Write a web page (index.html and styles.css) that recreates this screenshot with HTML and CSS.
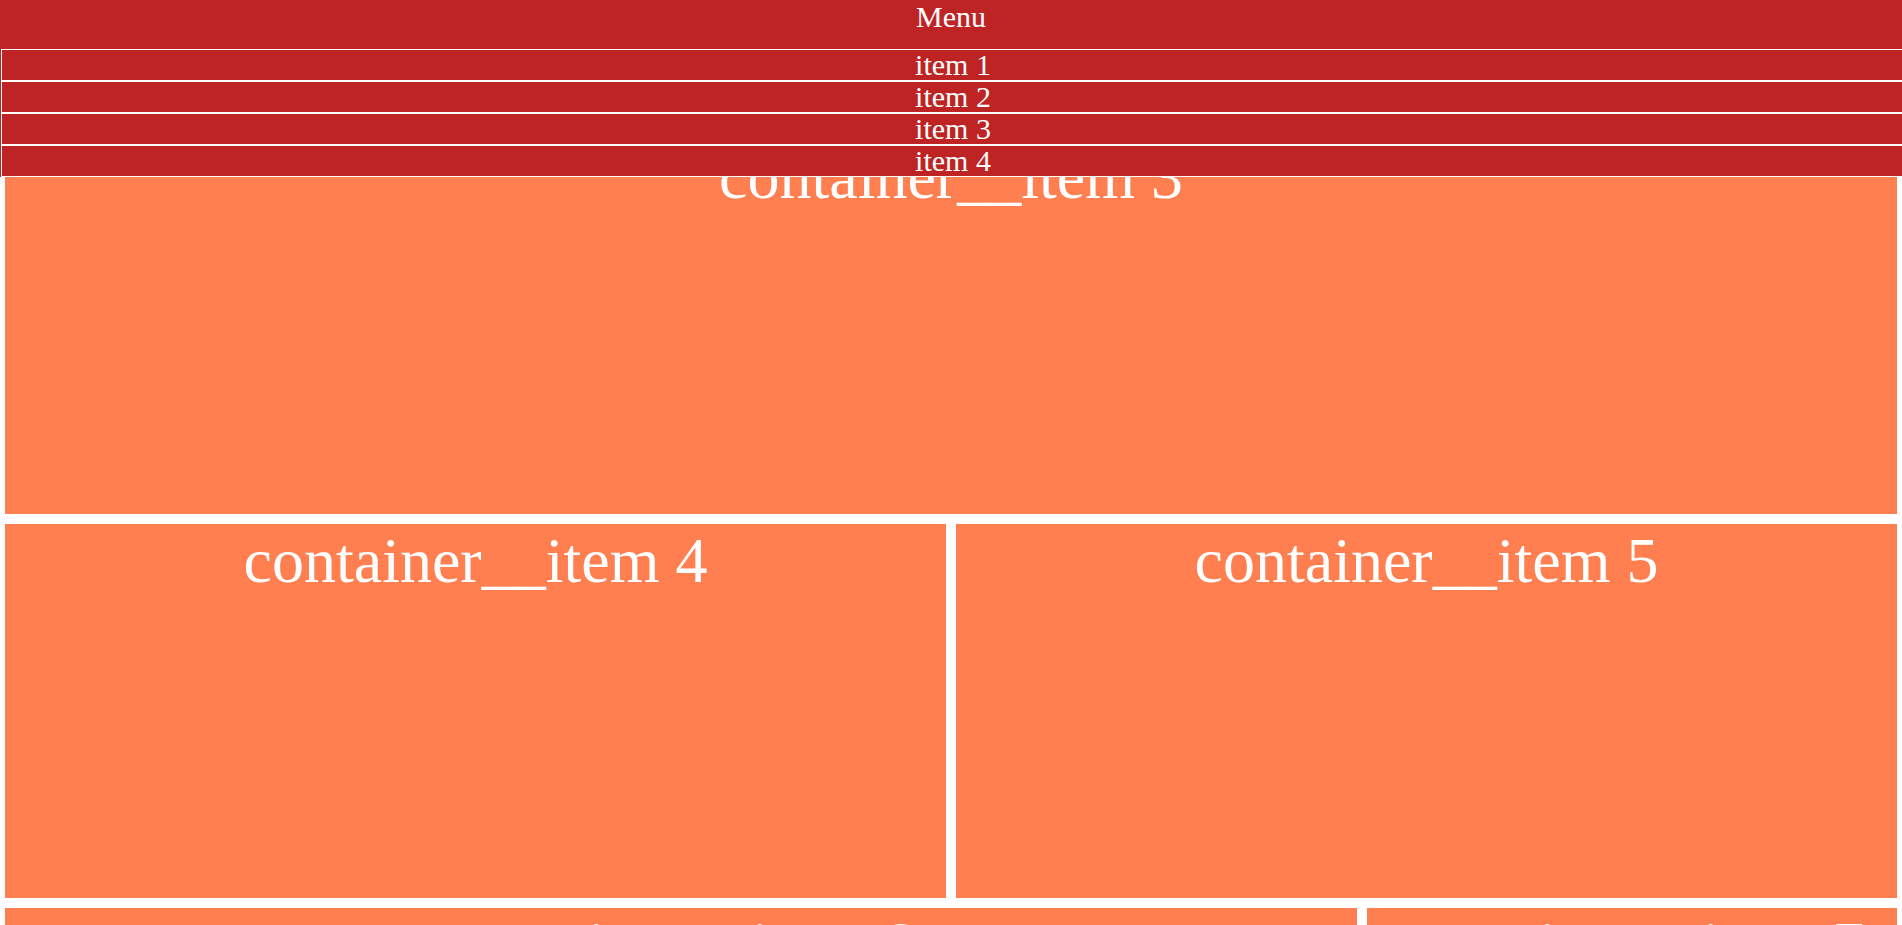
FILE: index.html
```html
<!DOCTYPE html>
<html lang="en">
<head>
  <meta charset="UTF-8" />
  <title>Grid layout</title>
  <link rel="stylesheet" href="styles.css">
</head>
<body>
  <header class="menu">
    <div class="menu__title">Menu</div>
    <ul class="menu__list">
      <li class="menu__item">item 1</li>
      <li class="menu__item">item 2</li>
      <li class="menu__item">item 3</li>
      <li class="menu__item">item 4</li>
    </ul>
  </header>

  <div class="container">
    <div class="container__item item--wide">container__item 3</div>
    <div class="container__item">container__item 4</div>
    <div class="container__item item--right">container__item 5</div>
    <div class="container__item item--left">container__item 6</div>
    <div class="container__item">container__item 7</div>
  </div>
</body>
</html>
```

FILE: styles.css
```css
body {
  margin: 0;
  font-family: "Liberation Serif", "Times New Roman", serif;
  color: #fff;
  background: #fff;
  overflow: hidden;
}

.menu {
  position: relative;
  height: 49px;
  background: #bf2424;
  text-align: center;
  font-size: 30px;
}

.menu__list {
  position: absolute;
  top: 49px;
  left: 0;
  width: 100%;
  margin: 0;
  padding: 0;
  list-style: none;
  background: #bf2424;
}

.menu__item {
  width: 100%;
  height: 30px;
  line-height: 30px;
  margin-left: 1px;
  border: 1px solid #fff;
}

.container {
  display: grid;
  grid-template-columns: 941fr 401fr 530fr;
  grid-auto-rows: 374px;
  gap: 10px;
  padding: 91px 5px 5px;
}

.container__item {
  background: #ff7f50;
  text-align: center;
  font-size: 64px;
}

.item--wide {
  grid-column: 1 / 4;
}

.item--right {
  grid-column: 2 / 4;
}

.item--left {
  grid-column: 1 / 3;
}
```
